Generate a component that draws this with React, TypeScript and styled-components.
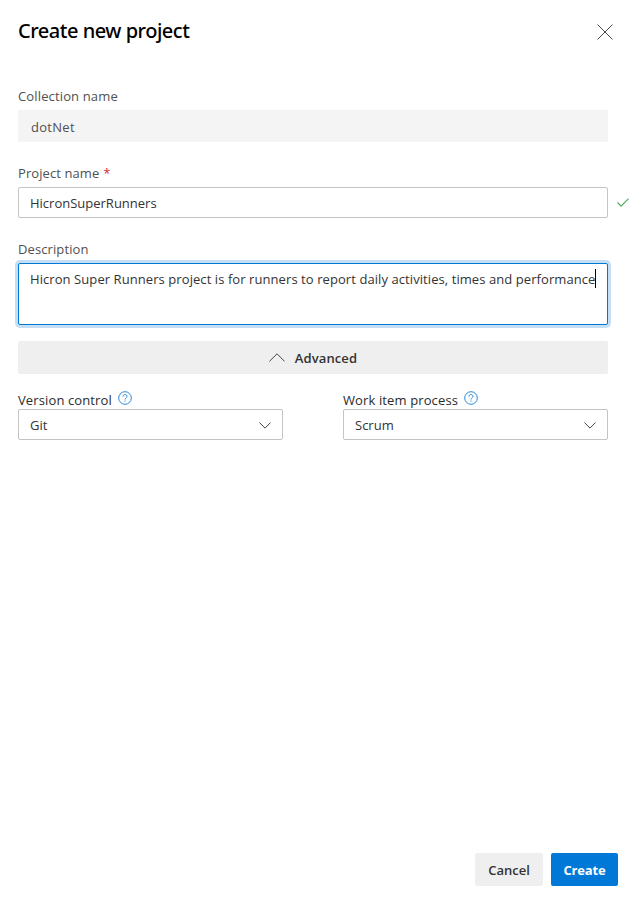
import React from "react";
import styled, { createGlobalStyle } from "styled-components";

const GlobalStyle = createGlobalStyle`
  *, *::before, *::after { box-sizing: border-box; }
  html, body { margin: 0; background: #fff; overflow: hidden; }
  body { font-family: "Open Sans", "Noto Sans", sans-serif; font-size: 13px; color: #333; }
  svg { display: block; flex: none; fill: none; }
`;

const Panel = styled.div`
  display: flex;
  flex-direction: column;
  width: 631px;
  height: 897px;
  padding: 18px 13px 11px 18px;
`;

const Header = styled.header`
  display: flex;
  justify-content: space-between;
  height: 26px;
  margin-bottom: 42px;
  padding-right: 5px;
`;

const Title = styled.h1`
  margin: 0;
  font: 500 20px/26px "Noto Sans", sans-serif;
  letter-spacing: -0.48px;
  color: #000;
  white-space: nowrap;
`;

const CloseButton = styled.button`
  display: flex;
  width: 16px;
  height: 16px;
  margin-top: 6px;
  padding: 0;
  border: 0;
  background: none;
`;

const Form = styled.main`
  display: flex;
  flex: 1;
  flex-direction: column;
  width: 590px;
`;

const Text = styled.span<{ $spacing?: number }>`
  white-space: nowrap;
  letter-spacing: ${({ $spacing = 0 }) => $spacing}px;
`;

const Label = styled.label<{ $dark?: boolean }>`
  display: flex;
  align-items: center;
  height: 20px;
  color: ${({ $dark }) => ($dark ? "#2b2b2b" : "#505050")};
`;

const Required = styled.span`
  margin-left: 4px;
  color: #cd2a30;
`;

const ReadOnlyValue = styled.div`
  display: flex;
  align-items: center;
  height: 32px;
  margin: 4px 0 21px;
  padding: 2px 13px 0;
  background: #f4f4f4;
  color: #505050;
`;

const InputRow = styled.div`
  display: flex;
  align-items: center;
  width: 613px;
  margin: 4px 0 21px;
`;

const Box = styled.div`
  display: flex;
  flex: none;
  align-items: center;
  justify-content: space-between;
  width: 590px;
  height: 31px;
  padding: 1px 11px 0;
  border: 1px solid #c4c4c4;
  border-radius: 2px;
  background: #fff;
`;

const SelectBox = styled(Box)`
  width: 265px;
  margin-top: -1px;
`;

const TextArea = styled(Box)`
  height: 62px;
  align-items: flex-start;
  justify-content: flex-start;
  margin: 4px 0 16px;
  padding-top: 5px;
  border-color: #0078d4;
  box-shadow: 0 0 0 3px #c3def5;
`;

const Description = styled(Text)`
  line-height: 20px;
`;

const Caret = styled.span`
  width: 1px;
  height: 19px;
  background: #000;
`;

const ValidIcon = styled.svg`
  margin-left: 9px;
`;

const AdvancedToggle = styled.button`
  display: flex;
  align-items: center;
  justify-content: center;
  gap: 10px;
  height: 33px;
  margin-bottom: 16px;
  padding: 0;
  border: 0;
  border-radius: 2px;
  background: #efefef;
  font: 600 13px "Open Sans", sans-serif;
  color: #333;
`;

const Columns = styled.div`
  display: flex;
  justify-content: space-between;
`;

const HelpIcon = styled.svg`
  margin: -5px 0 0 6px;
`;

const Footer = styled.footer`
  display: flex;
  justify-content: flex-end;
  gap: 8px;
`;

const Button = styled.button<{ $primary?: boolean }>`
  width: ${({ $primary }) => ($primary ? 67 : 68)}px;
  height: 33px;
  padding: 1px 0 0;
  border: 0;
  border-radius: 2px;
  font: ${({ $primary }) => ($primary ? 700 : 600)} 13px "Open Sans", sans-serif;
  background: ${({ $primary }) => ($primary ? "#0078d7" : "#efefef")};
  color: ${({ $primary }) => ($primary ? "#fff" : "#333")};
`;

const ChevronDown = () => (
  <svg width="12" height="7" viewBox="0 0 12 7" stroke="#444">
    <path d="M.4.5 6 6.1 11.6.5" />
  </svg>
);

const Help = () => (
  <HelpIcon width="14" height="14" viewBox="0 0 14 14" stroke="#2b88d8">
    <circle cx="7" cy="7" r="6.3" />
    <path d="M5 5.5C5 4.3 5.8 3.6 7 3.6s2 .7 2 1.7c0 1.5-2 1.6-2 3.2M7 9.5v1.1" />
  </HelpIcon>
);

type SelectProps = { label: string; value: string };

const SelectField = ({ label, value }: SelectProps) => (
  <div>
    <Label $dark>
      <Text $spacing={0.12}>{label}</Text>
      <Help />
    </Label>
    <SelectBox>
      <Text>{value}</Text>
      <ChevronDown />
    </SelectBox>
  </div>
);

export default function App() {
  return (
    <>
      <GlobalStyle />
      <Panel>
        <Header>
          <Title>Create new project</Title>
          <CloseButton aria-label="Close">
            <svg width="16" height="16" viewBox="0 0 16 16" stroke="#444">
              <path d="m.5.5 15 15m0-15-15 15" />
            </svg>
          </CloseButton>
        </Header>
        <Form>
          <Label><Text $spacing={0.14}>Collection name</Text></Label>
          <ReadOnlyValue><Text $spacing={0.28}>dotNet</Text></ReadOnlyValue>
          <Label>
            <Text $spacing={0.08}>Project name</Text>
            <Required>*</Required>
          </Label>
          <InputRow>
            <Box><Text>HicronSuperRunners</Text></Box>
            <ValidIcon width="12" height="9" viewBox="0 0 12 9" stroke="#4fae5c" strokeWidth="1.2">
              <path d="m.5 4.5 3.6 3.6L11.5.7" />
            </ValidIcon>
          </InputRow>
          <Label><Text $spacing={0.1}>Description</Text></Label>
          <TextArea>
            <Description $spacing={0.075}>
              Hicron Super Runners project is for runners to report daily activities, times and performance
            </Description>
            <Caret />
          </TextArea>
          <AdvancedToggle>
            <svg width="16" height="9" viewBox="0 0 16 9" stroke="#444">
              <path d="M.4 8.4 8 .8l7.6 7.6" />
            </svg>
            <Text $spacing={0.1}>Advanced</Text>
          </AdvancedToggle>
          <Columns>
            <SelectField label="Version control" value="Git" />
            <SelectField label="Work item process" value="Scrum" />
          </Columns>
        </Form>
        <Footer>
          <Button><Text>Cancel</Text></Button>
          <Button $primary><Text $spacing={-0.15}>Create</Text></Button>
        </Footer>
      </Panel>
    </>
  );
}
